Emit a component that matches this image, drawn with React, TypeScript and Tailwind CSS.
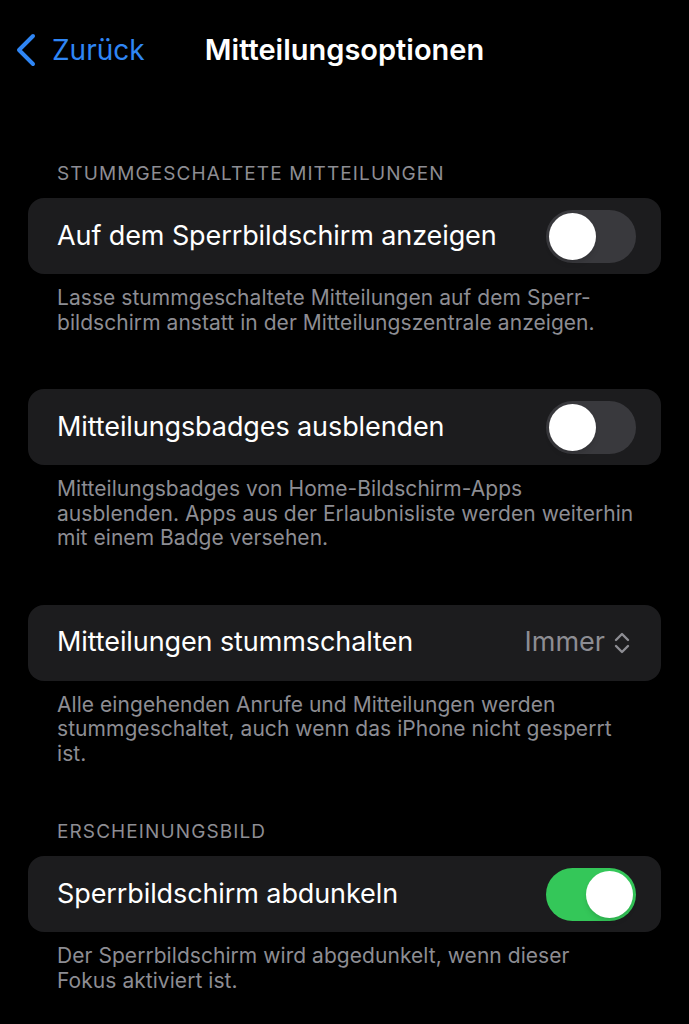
import React from "react";

function Toggle({ on }: { on: boolean }) {
  return (
    <div
      className={`w-[90px] h-[53px] rounded-full p-[3px] flex ${on ? "bg-[#34c759] justify-end" : "bg-[#39393d] justify-start"}`}
    >
      <div className="w-[47px] h-[47px] rounded-full bg-white shadow-md" />
    </div>
  );
}

function Row({ label, right }: { label: string; right: React.ReactNode }) {
  return (
    <div className="mx-[28px] h-[76px] rounded-[16px] bg-[#1c1c1e] flex items-center justify-between pl-[29px] pr-[25px]">
      <span className="text-[27px] text-white tracking-[-0.1px] whitespace-nowrap">{label}</span>
      {right}
    </div>
  );
}

function Footer({ children }: { children: React.ReactNode }) {
  return (
    <p className="ml-[57px] mt-[12px] text-[21px] leading-[24.5px] tracking-[0.05px] text-[#8d8d93] whitespace-nowrap">
      {children}
    </p>
  );
}

function Header({ children }: { children: React.ReactNode }) {
  return (
    <div className="ml-[57px] text-[19px] tracking-[1.1px] text-[#8d8d93] uppercase leading-[24px] mb-[12px] whitespace-nowrap">
      {children}
    </div>
  );
}

export default function App() {
  return (
    <div
      className="w-[689px] h-[1024px] bg-black overflow-hidden"
      style={{ fontFamily: "Inter, 'Noto Sans', sans-serif" }}
    >
      <div className="relative h-[100px] flex items-center justify-center">
        <div className="absolute left-[14px] top-[30px] flex items-center gap-[14px] text-[#2f86f5]">
          <svg width="24" height="36" viewBox="0 0 24 36" fill="none">
            <path d="M19 4 L5 18 L19 32" stroke="#2f86f5" strokeWidth="4" strokeLinecap="round" strokeLinejoin="round" />
          </svg>
          <span className="text-[28px] leading-[40px]">Zurück</span>
        </div>
        <span className="text-[29px] font-semibold text-white leading-[40px]">Mitteilungsoptionen</span>
      </div>

      <div className="pt-[62px]">
        <Header>Stummgeschaltete Mitteilungen</Header>
        <Row label="Auf dem Sperrbildschirm anzeigen" right={<Toggle on={false} />} />
        <Footer>
          Lasse stummgeschaltete Mitteilungen auf dem Sperr-
          <br />
          bildschirm anstatt in der Mitteilungszentrale anzeigen.
        </Footer>

        <div className="h-[54px]" />
        <Row label="Mitteilungsbadges ausblenden" right={<Toggle on={false} />} />
        <Footer>
          Mitteilungsbadges von Home-Bildschirm-Apps
          <br />
          ausblenden. Apps aus der Erlaubnisliste werden weiterhin
          <br />
          mit einem Badge versehen.
        </Footer>

        <div className="h-[54px]" />
        <Row
          label="Mitteilungen stummschalten"
          right={
            <div className="flex items-center gap-[9px] text-[#8d8d93] pr-[6px]">
              <span className="text-[27px]">Immer</span>
              <svg width="16" height="24" viewBox="0 0 16 24" fill="none">
                <path d="M2 9 L8 3 L14 9 M2 15 L8 21 L14 15" stroke="#8d8d93" strokeWidth="2.4" strokeLinecap="round" strokeLinejoin="round" />
              </svg>
            </div>
          }
        />
        <Footer>
          Alle eingehenden Anrufe und Mitteilungen werden
          <br />
          stummgeschaltet, auch wenn das iPhone nicht gesperrt
          <br />
          ist.
        </Footer>

        <div className="h-[54px]" />
        <Header>Erscheinungsbild</Header>
        <Row label="Sperrbildschirm abdunkeln" right={<Toggle on={true} />} />
        <Footer>
          Der Sperrbildschirm wird abgedunkelt, wenn dieser
          <br />
          Fokus aktiviert ist.
        </Footer>
      </div>
    </div>
  );
}
